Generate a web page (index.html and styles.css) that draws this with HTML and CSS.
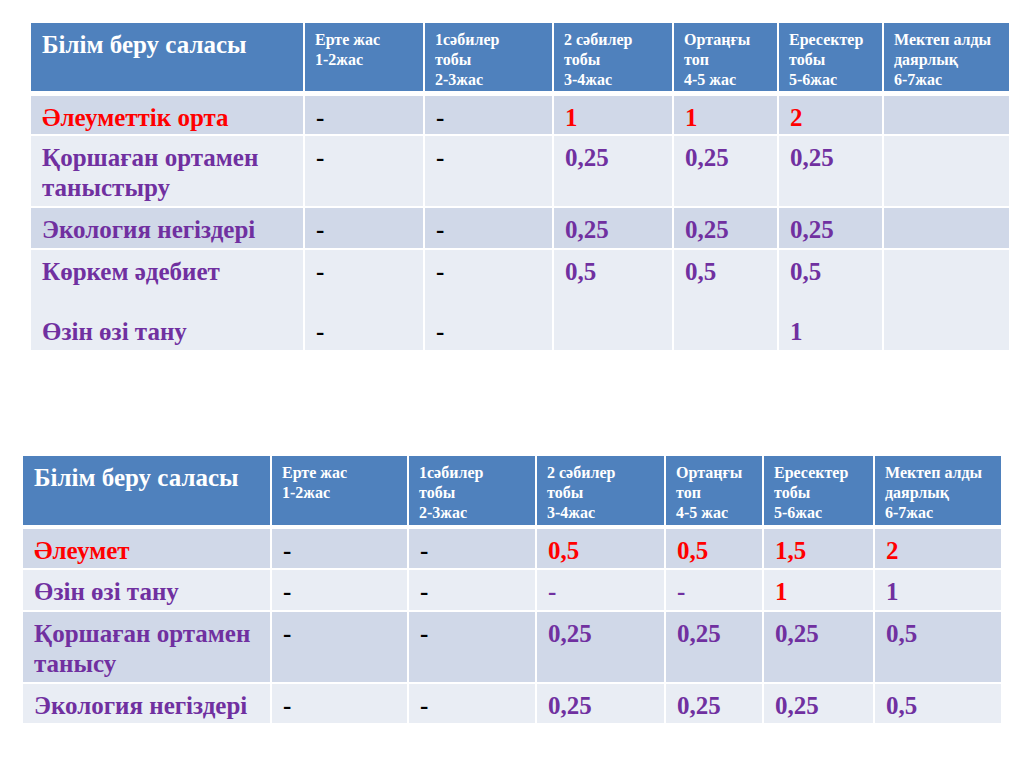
FILE: index.html
```html
<!DOCTYPE html>
<html lang="kk">
<head>
<meta charset="utf-8">
<title>Білім беру саласы</title>
<link rel="stylesheet" href="styles.css">
</head>
<body>
<div class="slide">
  <table class="grid grid-top">
    <colgroup>
      <col class="w274"><col class="w120"><col class="w129"><col class="w120"><col class="w105"><col class="w105"><col class="w127">
    </colgroup>
    <tr class="head h73">
      <th class="big">Білім беру саласы</th>
      <th>Ерте жас<br>1-2жас</th>
      <th>1сәбилер<br>тобы<br>2-3жас</th>
      <th>2 сәбилер<br>тобы<br>3-4жас</th>
      <th>Ортаңғы<br>топ<br>4-5 жас</th>
      <th>Ересектер<br>тобы<br>5-6жас</th>
      <th>Мектеп алды<br>даярлық<br>6-7жас</th>
    </tr>
    <tr class="dark h40">
      <td class="red">Әлеуметтік орта</td>
      <td class="dash">-</td>
      <td class="dash">-</td>
      <td class="red">1</td>
      <td class="red">1</td>
      <td class="red">2</td>
      <td></td>
    </tr>
    <tr class="light h72">
      <td>Қоршаған ортамен таныстыру</td>
      <td class="dash">-</td>
      <td class="dash">-</td>
      <td>0,25</td>
      <td>0,25</td>
      <td>0,25</td>
      <td></td>
    </tr>
    <tr class="dark h42">
      <td>Экология негіздері</td>
      <td class="dash">-</td>
      <td class="dash">-</td>
      <td>0,25</td>
      <td>0,25</td>
      <td>0,25</td>
      <td></td>
    </tr>
    <tr class="light h102">
      <td>Көркем әдебиет<br><br>Өзін өзі тану</td>
      <td class="dash">-<br><br>-</td>
      <td class="dash">-<br><br>-</td>
      <td>0,5</td>
      <td>0,5</td>
      <td>0,5<br><br>1</td>
      <td></td>
    </tr>
  </table>

  <table class="grid grid-bottom">
    <colgroup>
      <col class="w249"><col class="w137"><col class="w128"><col class="w129"><col class="w98"><col class="w111"><col class="w128">
    </colgroup>
    <tr class="head head-b h73">
      <th class="big">Білім беру саласы</th>
      <th>Ерте жас<br>1-2жас</th>
      <th>1сәбилер<br>тобы<br>2-3жас</th>
      <th>2 сәбилер<br>тобы<br>3-4жас</th>
      <th>Ортаңғы<br>топ<br>4-5 жас</th>
      <th>Ересектер<br>тобы<br>5-6жас</th>
      <th>Мектеп алды<br>даярлық<br>6-7жас</th>
    </tr>
    <tr class="dark h41">
      <td class="red">Әлеумет</td>
      <td class="dash">-</td>
      <td class="dash">-</td>
      <td class="red">0,5</td>
      <td class="red">0,5</td>
      <td class="red">1,5</td>
      <td class="red">2</td>
    </tr>
    <tr class="light h42">
      <td>Өзін өзі тану</td>
      <td class="dash">-</td>
      <td class="dash">-</td>
      <td>-</td>
      <td>-</td>
      <td class="red">1</td>
      <td>1</td>
    </tr>
    <tr class="dark h72">
      <td>Қоршаған ортамен танысу</td>
      <td class="dash">-</td>
      <td class="dash">-</td>
      <td>0,25</td>
      <td>0,25</td>
      <td>0,25</td>
      <td>0,5</td>
    </tr>
    <tr class="light h41">
      <td>Экология негіздері</td>
      <td class="dash">-</td>
      <td class="dash">-</td>
      <td>0,25</td>
      <td>0,25</td>
      <td>0,25</td>
      <td>0,5</td>
    </tr>
  </table>
</div>
</body>
</html>
```
FILE: styles.css
```css
html, body {
  margin: 0;
  padding: 0;
  background: #ffffff;
}

.slide {
  width: 1024px;
  height: 767px;
  overflow: hidden;
  display: flex;
  flex-direction: column;
  align-items: flex-start;
}

.grid {
  width: 980px;
  table-layout: fixed;
  border-collapse: separate;
  border-spacing: 0;
  font-family: "Liberation Serif", "Times New Roman", serif;
  font-weight: bold;
  color: #7030a0;
}

.grid-top {
  margin: 23px 0 0 31px;
}

.grid-bottom {
  margin: 104px 0 0 23px;
}

.w274 { width: 274px; }
.w249 { width: 249px; }
.w137 { width: 137px; }
.w129 { width: 129px; }
.w128 { width: 128px; }
.w127 { width: 127px; }
.w120 { width: 120px; }
.w111 { width: 111px; }
.w105 { width: 105px; }
.w98 { width: 98px; }

.grid th,
.grid td {
  border: 0 solid #ffffff;
  border-right-width: 2px;
  border-bottom-width: 2px;
  padding: 7px 10px 0 11px;
  vertical-align: top;
  text-align: left;
  overflow: hidden;
}

.grid td {
  font-size: 25px;
  line-height: 30px;
}

.grid th {
  background: #4f81bd;
  color: #ffffff;
  font-size: 16px;
  line-height: 20px;
  padding-left: 10px;
  padding-top: 7px;
  border-bottom-width: 5px;
}

.head-b th {
  border-bottom-width: 4px;
}

.grid th.big {
  font-size: 25px;
  line-height: 30px;
  padding-left: 11px;
  padding-top: 7px;
}

.dark td { background: #d0d8e8; }
.light td { background: #e9edf4; }

.grid td.red { color: #ff0000; }
.grid td.dash { color: #000000; }

.h40 { height: 40px; }
.h41 { height: 41px; }
.h42 { height: 42px; }
.h72 { height: 72px; }
.h73 { height: 73px; }
.h102 { height: 102px; }
```
